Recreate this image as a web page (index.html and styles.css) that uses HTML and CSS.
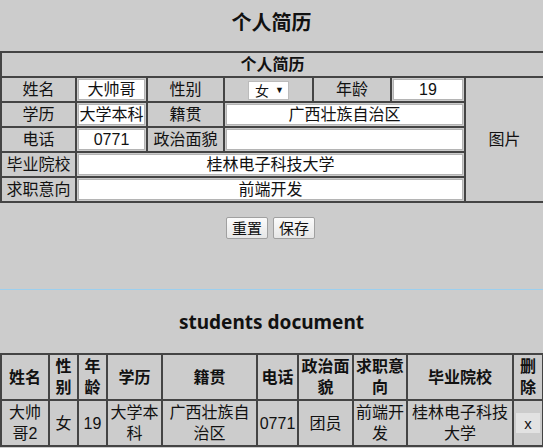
FILE: index.html
```html
<!DOCTYPE html>
<html lang="zh">
<head>
<meta charset="utf-8">
<title>个人简历</title>
<link rel="stylesheet" href="styles.css">
</head>
<body>
<h2 class="page-title">个人简历</h2>
<table class="resume">
  <colgroup>
    <col class="c75"><col class="c71"><col class="c77"><col class="c89"><col class="c78"><col class="c74"><col class="c79">
  </colgroup>
  <tr><th colspan="7" class="resume-head">个人简历</th></tr>
  <tr>
    <td>姓名</td>
    <td><input class="field" value="大帅哥"></td>
    <td>性别</td>
    <td><span class="sel"><select class="sel-box"><option>女</option><option>男</option></select><span class="sel-arrow">▼</span></span></td>
    <td>年龄</td>
    <td><input class="field" value="19"></td>
    <td rowspan="5">图片</td>
  </tr>
  <tr>
    <td>学历</td>
    <td><input class="field" value="大学本科"></td>
    <td>籍贯</td>
    <td colspan="3"><input class="field" value="广西壮族自治区"></td>
  </tr>
  <tr>
    <td>电话</td>
    <td><input class="field" value="0771"></td>
    <td>政治面貌</td>
    <td colspan="3"><input class="field" value=""></td>
  </tr>
  <tr>
    <td>毕业院校</td>
    <td colspan="5"><input class="field" value="桂林电子科技大学"></td>
  </tr>
  <tr>
    <td>求职意向</td>
    <td colspan="5"><input class="field" value="前端开发"></td>
  </tr>
</table>
<div class="actions">
  <button class="btn">重置</button>
  <button class="btn">保存</button>
</div>
<div class="divider"></div>
<h2 class="list-title">students document</h2>
<table class="students">
  <colgroup>
    <col class="s48"><col class="s29"><col class="s29"><col class="s55"><col class="s95"><col class="s41"><col class="s55"><col class="s54"><col class="s106"><col class="s30">
  </colgroup>
  <tr>
    <th>姓名</th><th>性别</th><th>年龄</th><th>学历</th><th>籍贯</th><th>电话</th><th>政治面貌</th><th>求职意向</th><th>毕业院校</th><th>删除</th>
  </tr>
  <tr>
    <td>大帅哥2</td><td>女</td><td>19</td><td>大学本科</td><td>广西壮族自治区</td><td>0771</td><td>团员</td><td>前端开发</td><td>桂林电子科技大学</td><td><button class="del">x</button></td>
  </tr>
</table>
</body>
</html>
```
FILE: styles.css
```css
html, body {
  margin: 0;
  padding: 0;
  background: #cccccc;
}
body {
  font-family: "Liberation Sans", "Noto Sans CJK SC", sans-serif;
  font-size: 16px;
  color: #111;
}
.page-title {
  margin: 0 0 16px;
  padding-top: 11px;
  font-size: 20px;
  line-height: 24px;
  text-align: center;
  font-weight: bold;
}
.resume, .students {
  border-collapse: collapse;
  table-layout: fixed;
  border: 2px solid #3c3c3c;
}
.resume { width: 543px; }
.students { width: 542px; }
.resume td, .resume th, .students td, .students th {
  border: 2px solid #444;
  padding: 1px;
  text-align: center;
  vertical-align: middle;
}
.resume td, .resume th {
  height: 21px;
  line-height: 21px;
}
.resume-head { font-weight: bold; }
.c75 { width: 75px; } .c71 { width: 71px; } .c77 { width: 77px; } .c89 { width: 89px; }
.c78 { width: 78px; } .c74 { width: 74px; } .c79 { width: 79px; }
.field {
  display: block;
  box-sizing: border-box;
  width: 100%;
  height: 21px;
  margin: 0;
  padding: 0;
  border: 1px solid #b4b4b4;
  background: #fff;
  font: inherit;
  font-size: 16px;
  text-align: center;
  color: #111;
}
.sel {
  display: inline-flex;
  align-items: center;
  height: 17px;
  padding: 0 4px 0 6px;
  gap: 6px;
  background: #fff;
  border: 1px solid #bbb;
  vertical-align: middle;
}
.sel-box {
  appearance: none;
  -webkit-appearance: none;
  border: 0;
  padding: 0;
  margin: 0;
  background: transparent;
  font-family: "Noto Sans CJK SC", sans-serif;
  font-size: 14px;
  line-height: 17px;
  height: 17px;
  color: #111;
}
.sel-arrow {
  font-size: 9px;
  line-height: 17px;
  color: #111;
}
.actions {
  margin-top: 14px;
  display: flex;
  justify-content: center;
  gap: 5px;
  padding-right: 2px;
}
.btn {
  box-sizing: border-box;
  width: 42px;
  height: 22px;
  padding: 0;
  border: 1px solid #a0a0a0;
  border-radius: 2px;
  background: linear-gradient(#fbfbfb, #e6e6e6);
  font-family: "Noto Sans CJK SC", sans-serif;
  font-size: 15px;
  line-height: 20px;
  color: #111;
}
.divider {
  margin-top: 50px;
  height: 1px;
  background: #9ccfee;
}
.list-title {
  margin: 0;
  padding: 20px 0 0;
  height: 43px;
  font-family: "Noto Sans", "Noto Sans CJK SC", sans-serif;
  font-size: 19px;
  line-height: 24px;
  text-align: center;
  font-weight: bold;
}
.students th, .students td {
  line-height: 21px;
}
.students th { height: 42px; font-weight: bold; }
.students td { height: 42px; }
.s48 { width: 48px; } .s29 { width: 29px; } .s55 { width: 55px; } .s95 { width: 95px; }
.s41 { width: 41px; } .s54 { width: 54px; } .s106 { width: 106px; } .s30 { width: 30px; }
.del {
  width: 24px;
  height: 20px;
  padding: 0;
  border: 0;
  background: #e2e2e2;
  font-family: "Liberation Sans", sans-serif;
  font-size: 15px;
  color: #111;
}
```
